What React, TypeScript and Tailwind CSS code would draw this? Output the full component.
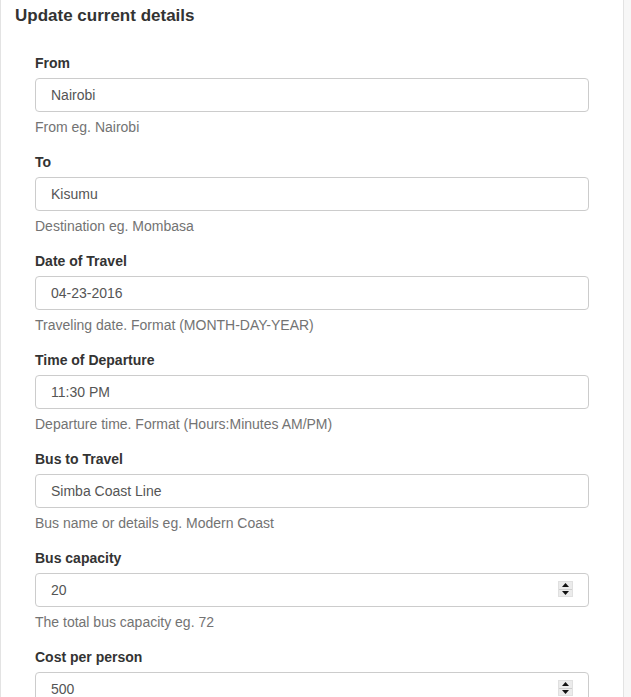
const fields = [
  { label: 'From', value: 'Nairobi', help: 'From eg. Nairobi' },
  { label: 'To', value: 'Kisumu', help: 'Destination eg. Mombasa' },
  { label: 'Date of Travel', value: '04-23-2016', help: 'Traveling date. Format (MONTH-DAY-YEAR)' },
  { label: 'Time of Departure', value: '11:30 PM', help: 'Departure time. Format (Hours:Minutes AM/PM)' },
  { label: 'Bus to Travel', value: 'Simba Coast Line', help: 'Bus name or details eg. Modern Coast' },
  { label: 'Bus capacity', value: '20', help: 'The total bus capacity eg. 72', number: true },
  { label: 'Cost per person', value: '500', help: '', number: true },
]

function Spinner() {
  return (
    <div className="absolute right-[16px] top-[8px] w-[15px] h-[16px] flex flex-col bg-[#ebebeb] border border-[#e0e0e0]">
      <div className="flex-1 flex items-center justify-center border-b border-[#cfcfcf]">
        <svg width="7" height="4" viewBox="0 0 7 4">
          <path d="M3.5 0 L7 4 L0 4 Z" fill="#111" />
        </svg>
      </div>
      <div className="flex-1 flex items-center justify-center">
        <svg width="7" height="4" viewBox="0 0 7 4">
          <path d="M0 0 L7 0 L3.5 4 Z" fill="#111" />
        </svg>
      </div>
    </div>
  )
}

export default function App() {
  return (
    <div
      className="min-h-screen bg-[#f7f7f7] text-[14px] leading-[20px] text-[#333]"
      style={{ fontFamily: '"Liberation Sans", Arial, sans-serif' }}
    >
      <div className="w-[624px] min-h-screen bg-white border-x border-[#e3e3e3]">
        <h4 className="pt-[6px] px-[14px] text-[17px] leading-[20px] font-bold text-[#333]">
          Update current details
        </h4>
        <form className="pt-[27px] pl-[34px] pr-[34px]">
          {fields.map((f) => (
            <div key={f.label} className="mb-[15px]">
              <label className="block font-bold mb-[5px]">{f.label}</label>
              <div className="relative">
                <input
                  readOnly
                  value={f.value}
                  className="block w-full h-[34px] px-[15px] border border-[#ccc] rounded-[4px] text-[#555] text-[14px] outline-none bg-white"
                />
                {f.number && <Spinner />}
              </div>
              {f.help && <p className="mt-[5px] text-[#737373]">{f.help}</p>}
            </div>
          ))}
        </form>
      </div>
    </div>
  )
}
